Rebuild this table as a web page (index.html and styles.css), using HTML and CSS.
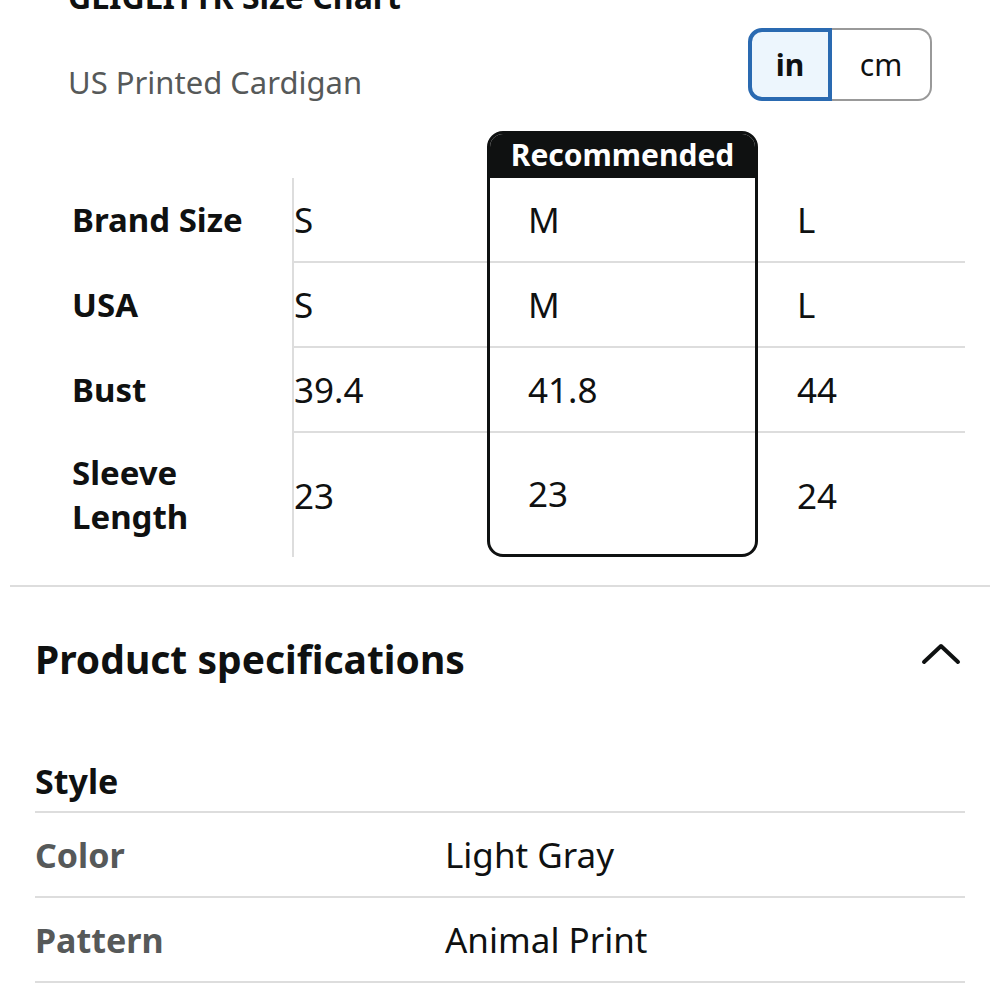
FILE: index.html
```html
<!DOCTYPE html>
<html lang="en">
<head>
    <meta charset="UTF-8">
    <meta name="viewport" content="width=device-width, initial-scale=1.0">
    <title>Size Chart</title>
    <link rel="stylesheet" href="styles.css">
</head>
<body>
    <div class="chart-head">
        <div class="chart-titles">
            <h2 class="chart-title">GLIGLITTR Size Chart</h2>
            <div class="chart-sub">US Printed Cardigan</div>
        </div>
        <div class="unit-toggle">
            <button class="unit unit-on">in</button>
            <button class="unit">cm</button>
        </div>
    </div>

    <div class="chart">
        <div class="col col-label">
            <div class="col-top"></div>
            <div class="cell">Brand Size</div>
            <div class="cell">USA</div>
            <div class="cell">Bust</div>
            <div class="cell cell-tall">Sleeve<br>Length</div>
        </div>
        <div class="col col-s">
            <div class="col-top"></div>
            <div class="cell">S</div>
            <div class="cell">S</div>
            <div class="cell">39.4</div>
            <div class="cell cell-tall">23</div>
        </div>
        <div class="col col-m">
            <div class="col-top">Recommended</div>
            <div class="cell">M</div>
            <div class="cell">M</div>
            <div class="cell">41.8</div>
            <div class="cell cell-tall">23</div>
        </div>
        <div class="col col-l">
            <div class="col-top"></div>
            <div class="cell">L</div>
            <div class="cell">L</div>
            <div class="cell">44</div>
            <div class="cell cell-tall">24</div>
        </div>
    </div>

    <div class="divider"></div>

    <div class="specs">
        <div class="specs-head">
            <h3>Product specifications</h3>
            <svg class="chevron" width="40" height="24" viewBox="0 0 40 24">
                <path d="M3 20 L20 4 L37 20" fill="none" stroke="#0f1111" stroke-width="4" stroke-linecap="round" stroke-linejoin="round"/>
            </svg>
        </div>
        <div class="spec-group">Style</div>
        <div class="spec-row">
            <div class="spec-key">Color</div>
            <div class="spec-val">Light Gray</div>
        </div>
        <div class="spec-row">
            <div class="spec-key">Pattern</div>
            <div class="spec-val">Animal Print</div>
        </div>
    </div>
</body>
</html>
```

FILE: styles.css
```css
body {
    font-family: "Noto Sans", Arial, sans-serif;
    color: #0f1111;
    background-color: white;
    margin: 0;
    padding: 0;
    overflow: hidden;
}
.chart-head {
    display: flex;
    justify-content: space-between;
    align-items: flex-start;
    padding: 0 68px;
}
.chart-title {
    font-size: 32px;
    font-weight: bold;
    line-height: 40px;
    margin: -23px 0 0 0;
}
.chart-sub {
    font-size: 31px;
    line-height: 40px;
    color: #565959;
    margin-top: 45px;
}
.unit-toggle {
    display: flex;
    margin-top: 28px;
}
.unit {
    font-family: inherit;
    font-size: 30px;
    color: #0f1111;
    height: 73px;
    background-color: white;
    padding: 0;
}
.unit-on {
    width: 84px;
    font-weight: bold;
    background-color: #edf6fd;
    border: 4px solid #2a6ab1;
    border-radius: 14px 0 0 14px;
}
.unit:not(.unit-on) {
    width: 100px;
    border: 2px solid #999;
    border-left: none;
    border-radius: 0 14px 14px 0;
}
.chart {
    display: flex;
    margin: 29px 0 0 72px;
}
.col-top {
    height: 47px;
}
.cell {
    height: 83px;
    display: flex;
    align-items: center;
    font-size: 35px;
    border-bottom: 2px solid #ddd;
}
.cell-tall {
    height: 124px;
    border-bottom: none;
}
.col-label {
    width: 221px;
}
.col-label .cell {
    font-size: 33px;
    font-weight: bold;
    line-height: 44px;
    border-bottom-color: transparent;
}
.col-s {
    width: 194px;
}
.col-s .cell {
    border-left: 2px solid #ddd;
    margin-left: -1px;
}
.col-m {
    width: 265px;
    border: 3px solid #0f1111;
    border-radius: 16px;
    overflow: hidden;
}
.col-m .col-top {
    height: 44px;
    background-color: #0f1111;
    color: white;
    font-size: 30px;
    font-weight: bold;
    text-align: center;
    line-height: 42px;
}
.col-m .cell {
    padding-left: 38px;
}
.col-m .cell-tall {
    height: 121px;
}
.col-l {
    width: 207px;
}
.col-l .cell {
    padding-left: 39px;
}
.divider {
    height: 2px;
    background-color: #ddd;
    margin: 28px 10px 0 10px;
}
.specs {
    padding: 0 35px;
}
.specs-head {
    display: flex;
    justify-content: space-between;
    align-items: center;
    height: 142px;
}
.specs-head h3 {
    font-size: 39px;
    margin: 0;
}
.chevron {
    margin-right: 4px;
    margin-top: -8px;
}
.spec-group {
    font-size: 34px;
    font-weight: bold;
    padding-top: 30px;
    height: 52px;
    line-height: 44px;
    border-bottom: 2px solid #ddd;
}
.spec-row {
    display: flex;
    align-items: center;
    height: 83px;
    font-size: 35px;
    border-bottom: 2px solid #ddd;
}
.spec-key {
    width: 410px;
    font-size: 34px;
    font-weight: bold;
    color: #565959;
}
```
